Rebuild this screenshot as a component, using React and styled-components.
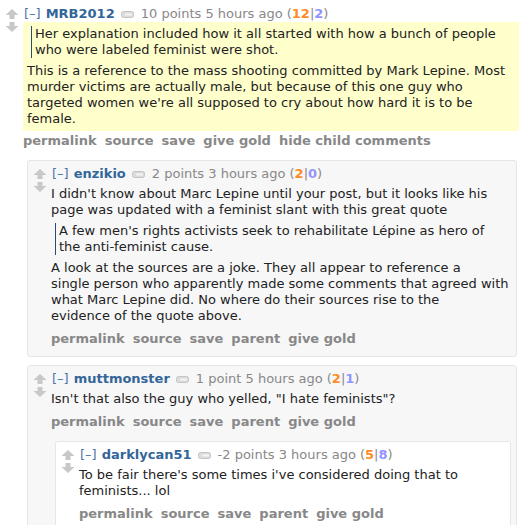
import React from 'react';
import styled, { createGlobalStyle } from 'styled-components';

const GlobalStyle = createGlobalStyle`
  html, body {
    margin: 0;
    padding: 0;
    background: #fff;
  }
  body {
    font-family: "DejaVu Sans", Verdana, sans-serif;
    font-size: 13px;
    line-height: 16px;
    color: #222;
    overflow: hidden;
  }
`;

const Page = styled.div`
  width: 519px;
  height: 525px;
  overflow: hidden;
`;

const Comment = styled.div`
  display: flex;
  align-items: flex-start;
  ${props => props.nested ? `
    margin: 0 ${props.$right}px 8px 4px;
    padding: 5px 5px 9px 5px;
    border: 1px solid #e6e6e6;
    border-radius: 3px;
    background: ${props.$alt ? '#fff' : '#f7f7f8'};
  ` : `
    padding: 6px 0 0 5px;
  `}
`;

const Votes = styled.div`
  flex: 0 0 18px;
  display: flex;
  flex-direction: column;
  gap: 3px;
  padding-top: 3px;
`;

const Entry = styled.div`
  flex: 1;
  min-width: 0;
`;

const Tagline = styled.div`
  color: #888;
  white-space: nowrap;
  display: flex;
  align-items: center;
`;

const Expand = styled.span`
  color: #4a76a6;
  margin: 0 5px 0 1px;
`;

const Author = styled.span`
  color: #369;
  font-weight: bold;
`;

const TagIcon = styled.svg`
  margin: 0 7px 0 6px;
`;

const Score = styled.span`
  margin-left: 4px;
`;

const Ups = styled.b`
  color: #ff8b24;
`;

const Downs = styled.b`
  color: #9494ff;
`;

const Body = styled.div`
  display: flow-root;
  padding: 4px ${props => props.highlight ? '4px' : '0'} 0;
  background: ${props => props.highlight ? '#ffffcc' : 'transparent'};
  white-space: nowrap;

  p {
    margin: 0 0 5px;
  }
  p:last-child {
    margin-bottom: ${props => props.highlight ? '4px' : '5px'};
  }
`;

const Quote = styled.blockquote`
  margin: 0 0 5px 4px;
  padding-left: 3px;
  border-left: 1px solid #2a4a78;
`;

const Buttons = styled.ul`
  list-style: none;
  margin: 2px 0 0;
  padding: 0;
  display: flex;
  gap: 8px;
  white-space: nowrap;
  font-weight: bold;
  color: #888;
`;

const Children = styled.div`
  margin-top: 11px;
`;

const Arrow = ({ down }) => (
  <svg width="14" height="10" viewBox="0 0 14 10" style={{ transform: down ? 'scaleY(-1)' : 'none' }}>
    <path d="M7 0 L13.5 6 L9.5 6 L9.5 10 L4.5 10 L4.5 6 L0.5 6 Z" fill="#c8c8c8" />
  </svg>
);

const Tag = () => (
  <TagIcon width="13" height="7" viewBox="0 0 13 7">
    <rect x="0.5" y="0.5" width="12" height="6" rx="2" fill="#dcdcdc" stroke="#c4c4c4" />
    <rect x="4" y="2.5" width="7" height="2" rx="1" fill="#f4f4f4" />
  </TagIcon>
);

// each paragraph is kept as the lines it wraps to in the original thread
const comments = [
  {
    author: 'MRB2012',
    meta: '10 points 5 hours ago',
    ups: 12,
    downs: 2,
    highlight: true,
    body: [
      { quote: ['Her explanation included how it all started with how a bunch of people', 'who were labeled feminist were shot.'] },
      { text: [
        'This is a reference to the mass shooting committed by Mark Lepine. Most',
        'murder victims are actually male, but because of this one guy who',
        "targeted women we're all supposed to cry about how hard it is to be",
        'female.',
      ] },
    ],
    buttons: ['permalink', 'source', 'save', 'give gold', 'hide child comments'],
    children: [
      {
        author: 'enzikio',
        meta: '2 points 3 hours ago',
        ups: 2,
        downs: 0,
        body: [
          { text: ["I didn't know about Marc Lepine until your post, but it looks like his", 'page was updated with a feminist slant with this great quote'] },
          { quote: ["A few men's rights activists seek to rehabilitate Lépine as hero of", 'the anti-feminist cause.'] },
          { text: [
            'A look at the sources are a joke. They all appear to reference a',
            'single person who apparently made some comments that agreed with',
            'what Marc Lepine did. No where do their sources rise to the',
            'evidence of the quote above.',
          ] },
        ],
        buttons: ['permalink', 'source', 'save', 'parent', 'give gold'],
      },
      {
        author: 'muttmonster',
        meta: '1 point 5 hours ago',
        ups: 2,
        downs: 1,
        body: [{ text: ['Isn\'t that also the guy who yelled, "I hate feminists"?'] }],
        buttons: ['permalink', 'source', 'save', 'parent', 'give gold'],
        children: [
          {
            author: 'darklycan51',
            meta: '-2 points 3 hours ago',
            ups: 5,
            downs: 8,
            body: [{ text: ["To be fair there's some times i've considered doing that to", 'feminists... lol'] }],
            buttons: ['permalink', 'source', 'save', 'parent', 'give gold'],
          },
        ],
      },
    ],
  },
];

const Lines = ({ lines }) => lines.map((l, i) => (
  <React.Fragment key={i}>
    {i > 0 && <br />}
    {l}
  </React.Fragment>
));

const CommentItem = ({ c, depth }) => (
  <Comment nested={depth > 0} $alt={depth % 2 === 0} $right={depth === 1 ? 2 : 0}>
    <Votes>
      <Arrow />
      <Arrow down />
    </Votes>
    <Entry>
      <Tagline>
        <Expand>[–]</Expand>
        <Author>{c.author}</Author>
        <Tag />
        <span>{c.meta}</span>
        <Score>
          (<Ups>{c.ups}</Ups>|<Downs>{c.downs}</Downs>)
        </Score>
      </Tagline>
      <Body highlight={c.highlight}>
        {c.body.map((b, i) =>
          b.quote
            ? <Quote key={i}><Lines lines={b.quote} /></Quote>
            : <p key={i}><Lines lines={b.text} /></p>
        )}
      </Body>
      <Buttons>
        {c.buttons.map(b => <li key={b}>{b}</li>)}
      </Buttons>
      {c.children && (
        <Children>
          {c.children.map(ch => <CommentItem key={ch.author} c={ch} depth={depth + 1} />)}
        </Children>
      )}
    </Entry>
  </Comment>
);

export default function App() {
  return (
    <Page>
      <GlobalStyle />
      {comments.map(c => <CommentItem key={c.author} c={c} depth={0} />)}
    </Page>
  );
}
